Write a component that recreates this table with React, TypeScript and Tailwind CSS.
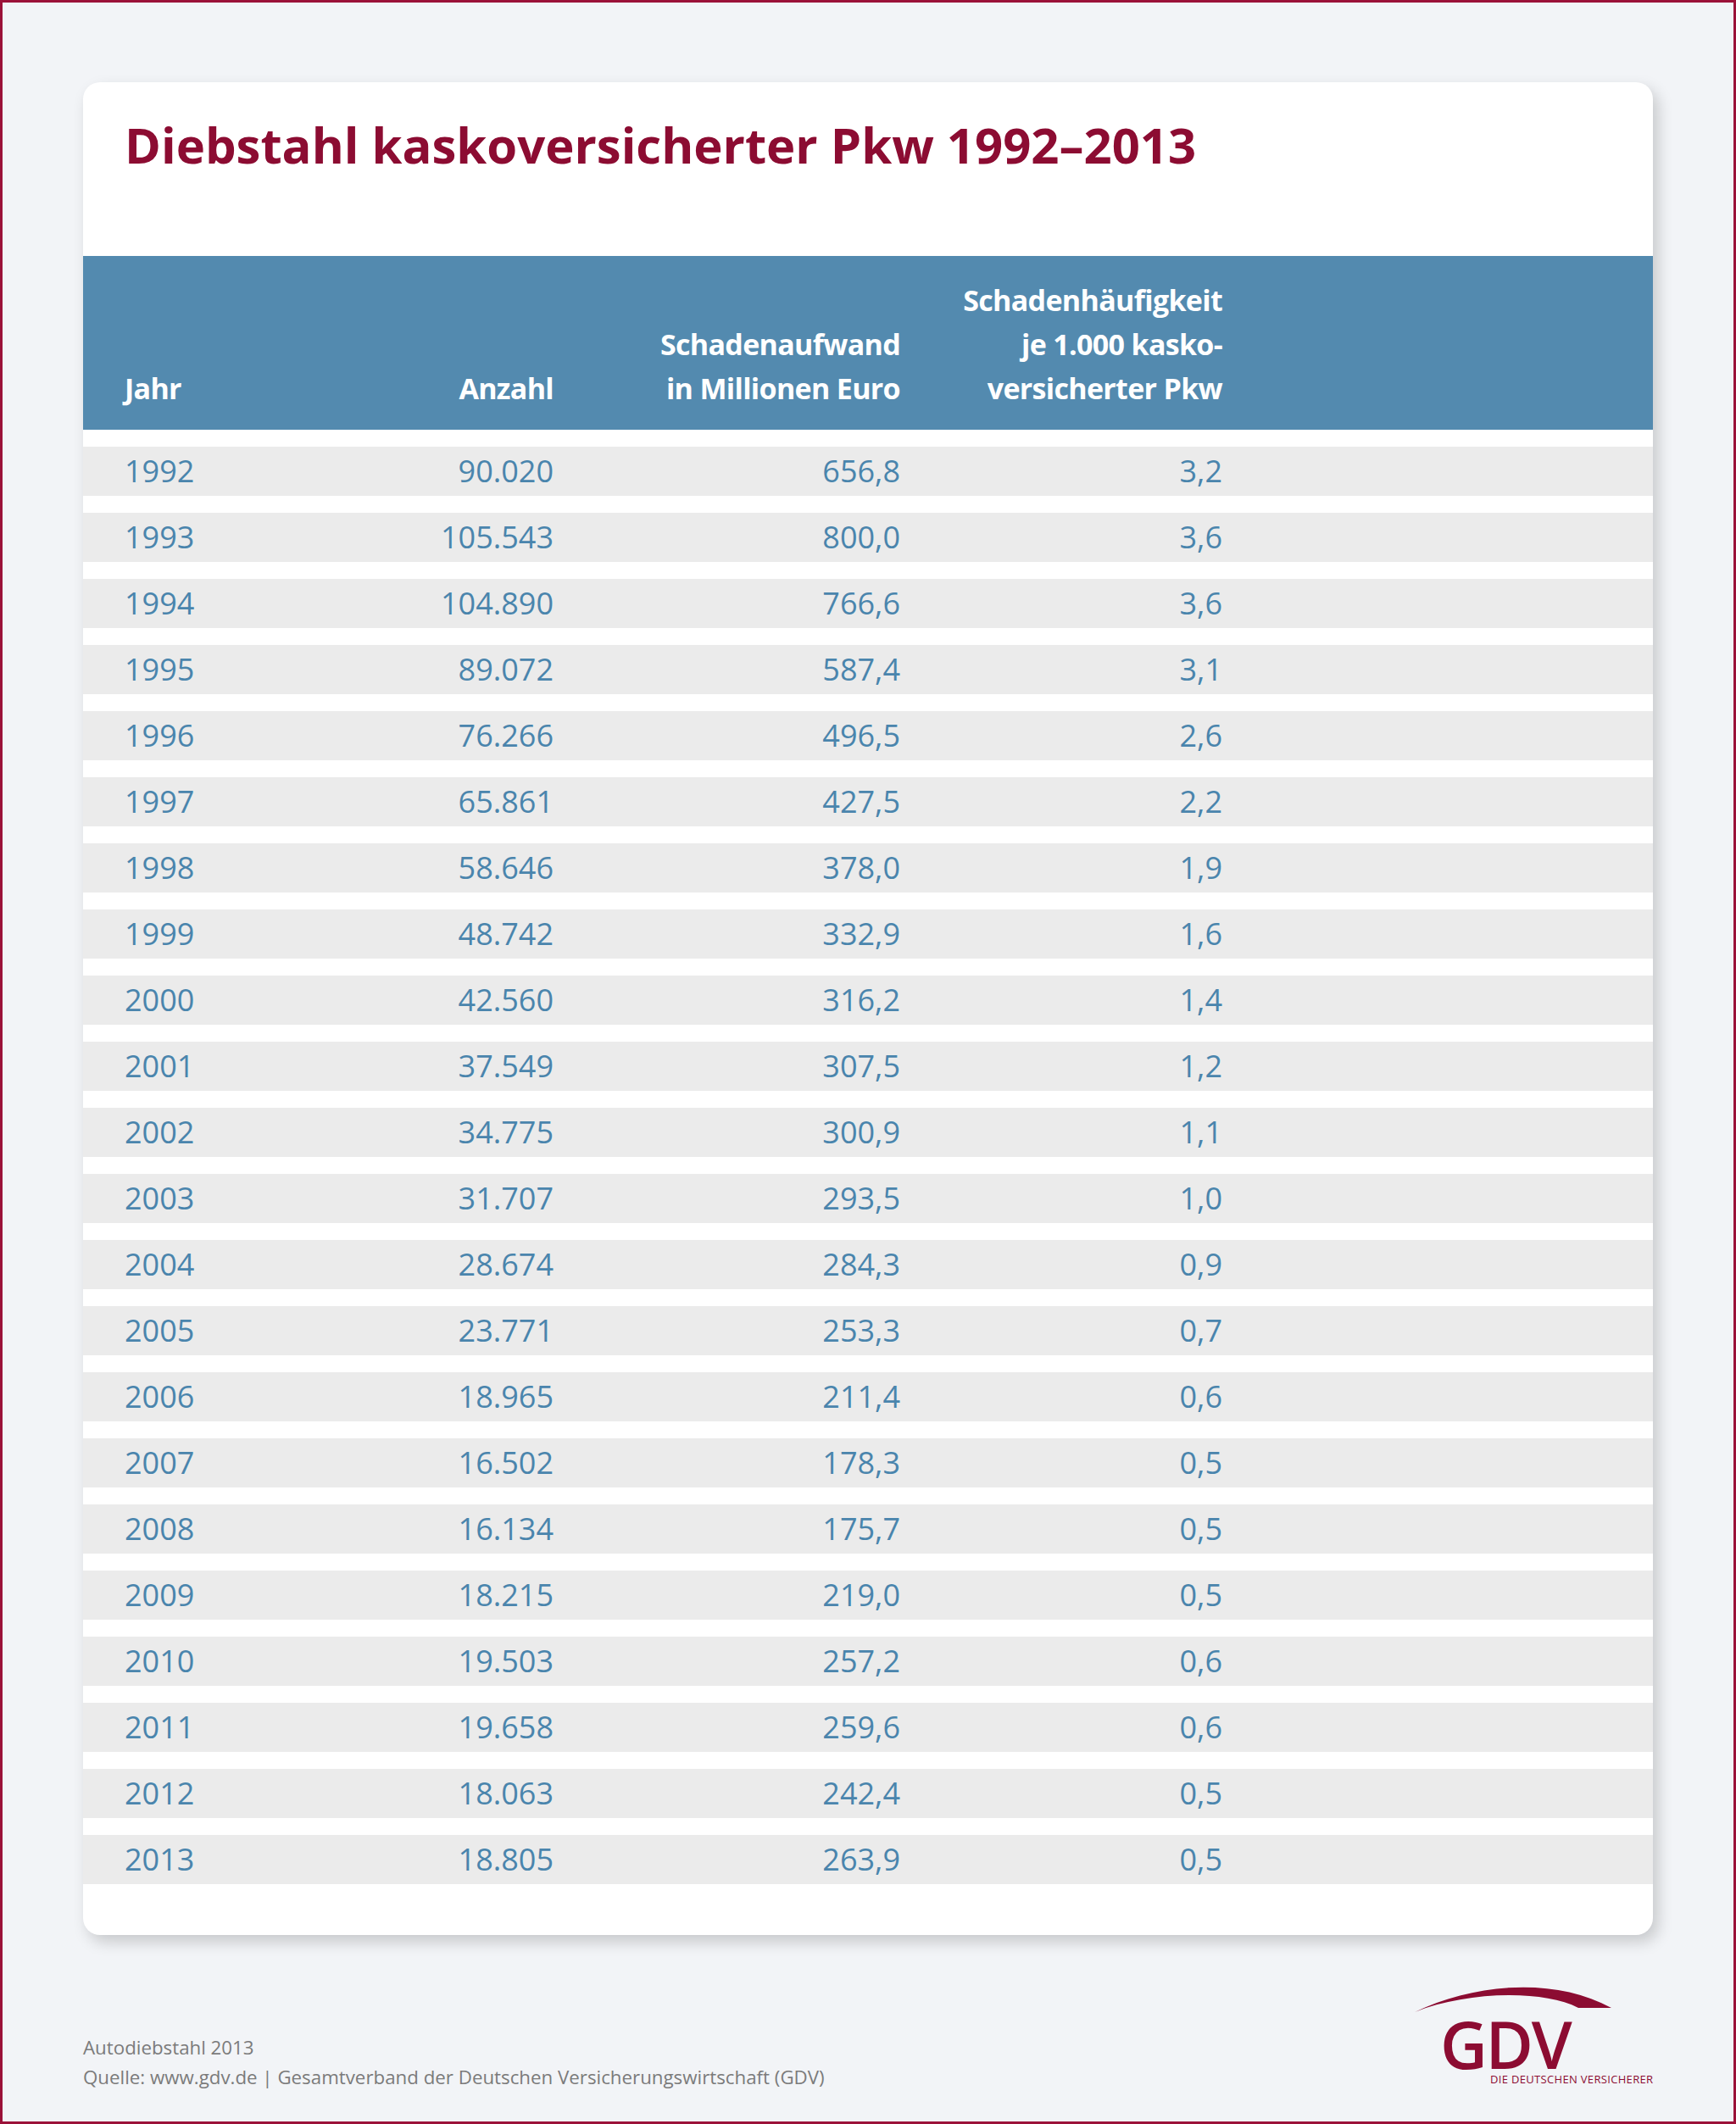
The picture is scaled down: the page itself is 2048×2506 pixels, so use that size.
const rows: [string, string, string, string][] = [
  ["1992", "90.020", "656,8", "3,2"],
  ["1993", "105.543", "800,0", "3,6"],
  ["1994", "104.890", "766,6", "3,6"],
  ["1995", "89.072", "587,4", "3,1"],
  ["1996", "76.266", "496,5", "2,6"],
  ["1997", "65.861", "427,5", "2,2"],
  ["1998", "58.646", "378,0", "1,9"],
  ["1999", "48.742", "332,9", "1,6"],
  ["2000", "42.560", "316,2", "1,4"],
  ["2001", "37.549", "307,5", "1,2"],
  ["2002", "34.775", "300,9", "1,1"],
  ["2003", "31.707", "293,5", "1,0"],
  ["2004", "28.674", "284,3", "0,9"],
  ["2005", "23.771", "253,3", "0,7"],
  ["2006", "18.965", "211,4", "0,6"],
  ["2007", "16.502", "178,3", "0,5"],
  ["2008", "16.134", "175,7", "0,5"],
  ["2009", "18.215", "219,0", "0,5"],
  ["2010", "19.503", "257,2", "0,6"],
  ["2011", "19.658", "259,6", "0,6"],
  ["2012", "18.063", "242,4", "0,5"],
  ["2013", "18.805", "263,9", "0,5"],
];

function GdvLogo() {
  return (
    <div className="flex w-[281px] flex-col">
      <svg width="232" height="34" viewBox="0 0 232 34" className="block">
        <path
          d="M0 32 C70 -2 165 -10 232 27 L193 27 C150 5 60 8 0 32 Z"
          fill="#8c0c32"
        />
      </svg>
      <span className="mt-[5px] ml-[30px] text-[77px] leading-[0.8] font-semibold tracking-[-0.03em] text-[#8c0c32]">
        GDV
      </span>
      <span className="mt-[4px] ml-[89px] whitespace-nowrap text-[13px] leading-none tracking-[0.025em] text-[#8c0c32]">
        DIE DEUTSCHEN VERSICHERER
      </span>
    </div>
  );
}

export default function App() {
  return (
    <div className="h-[2506px] w-[2048px] border-[3px] border-[#9b1239] bg-[#f2f4f7] px-[95px] pt-[94px] font-['Open_Sans',sans-serif]">
      <div className="rounded-[20px] bg-white pb-[60px] shadow-[6px_8px_18px_rgba(0,0,0,0.18)]">
        <div className="h-[205px] px-[49px] pt-[45px]">
          <h1 className="whitespace-nowrap text-[58px] leading-none font-bold text-[#8c0c32]">
            Diebstahl kaskoversicherter Pkw 1992–2013
          </h1>
        </div>

        <div className="flex h-[205px] items-end bg-[#538aaf] px-[49px] pb-[23px] text-[34px] leading-[52px] font-bold tracking-[-0.02em] whitespace-nowrap text-white">
          <div className="w-[200px]">Jahr</div>
          <div className="w-[306px] text-right">Anzahl</div>
          <div className="w-[409px] text-right">
            Schadenaufwand
            <br />
            in Millionen Euro
          </div>
          <div className="w-[380px] text-right">
            Schadenhäufigkeit
            <br />
            je 1.000 kasko-
            <br />
            versicherter Pkw
          </div>
        </div>

        {rows.map(([jahr, anzahl, aufwand, haeufigkeit]) => (
          <div
            key={jahr}
            className="mt-[20px] flex h-[58px] items-center bg-[#ebebeb] px-[49px] text-[36px] leading-[58px] text-[#4a85ad]"
          >
            <div className="w-[200px]">{jahr}</div>
            <div className="w-[306px] text-right">{anzahl}</div>
            <div className="w-[409px] text-right">{aufwand}</div>
            <div className="w-[380px] text-right">{haeufigkeit}</div>
          </div>
        ))}
      </div>

      <div className="flex items-start justify-between">
        <div className="mt-[115px] text-[22.3px] leading-[35px] whitespace-nowrap text-[#7b7b7b]">
          <p>Autodiebstahl 2013</p>
          <p>
            Quelle: www.gdv.de | Gesamtverband der Deutschen
            Versicherungswirtschaft (GDV)
          </p>
        </div>
        <div className="mt-[59px]">
          <GdvLogo />
        </div>
      </div>
    </div>
  );
}
